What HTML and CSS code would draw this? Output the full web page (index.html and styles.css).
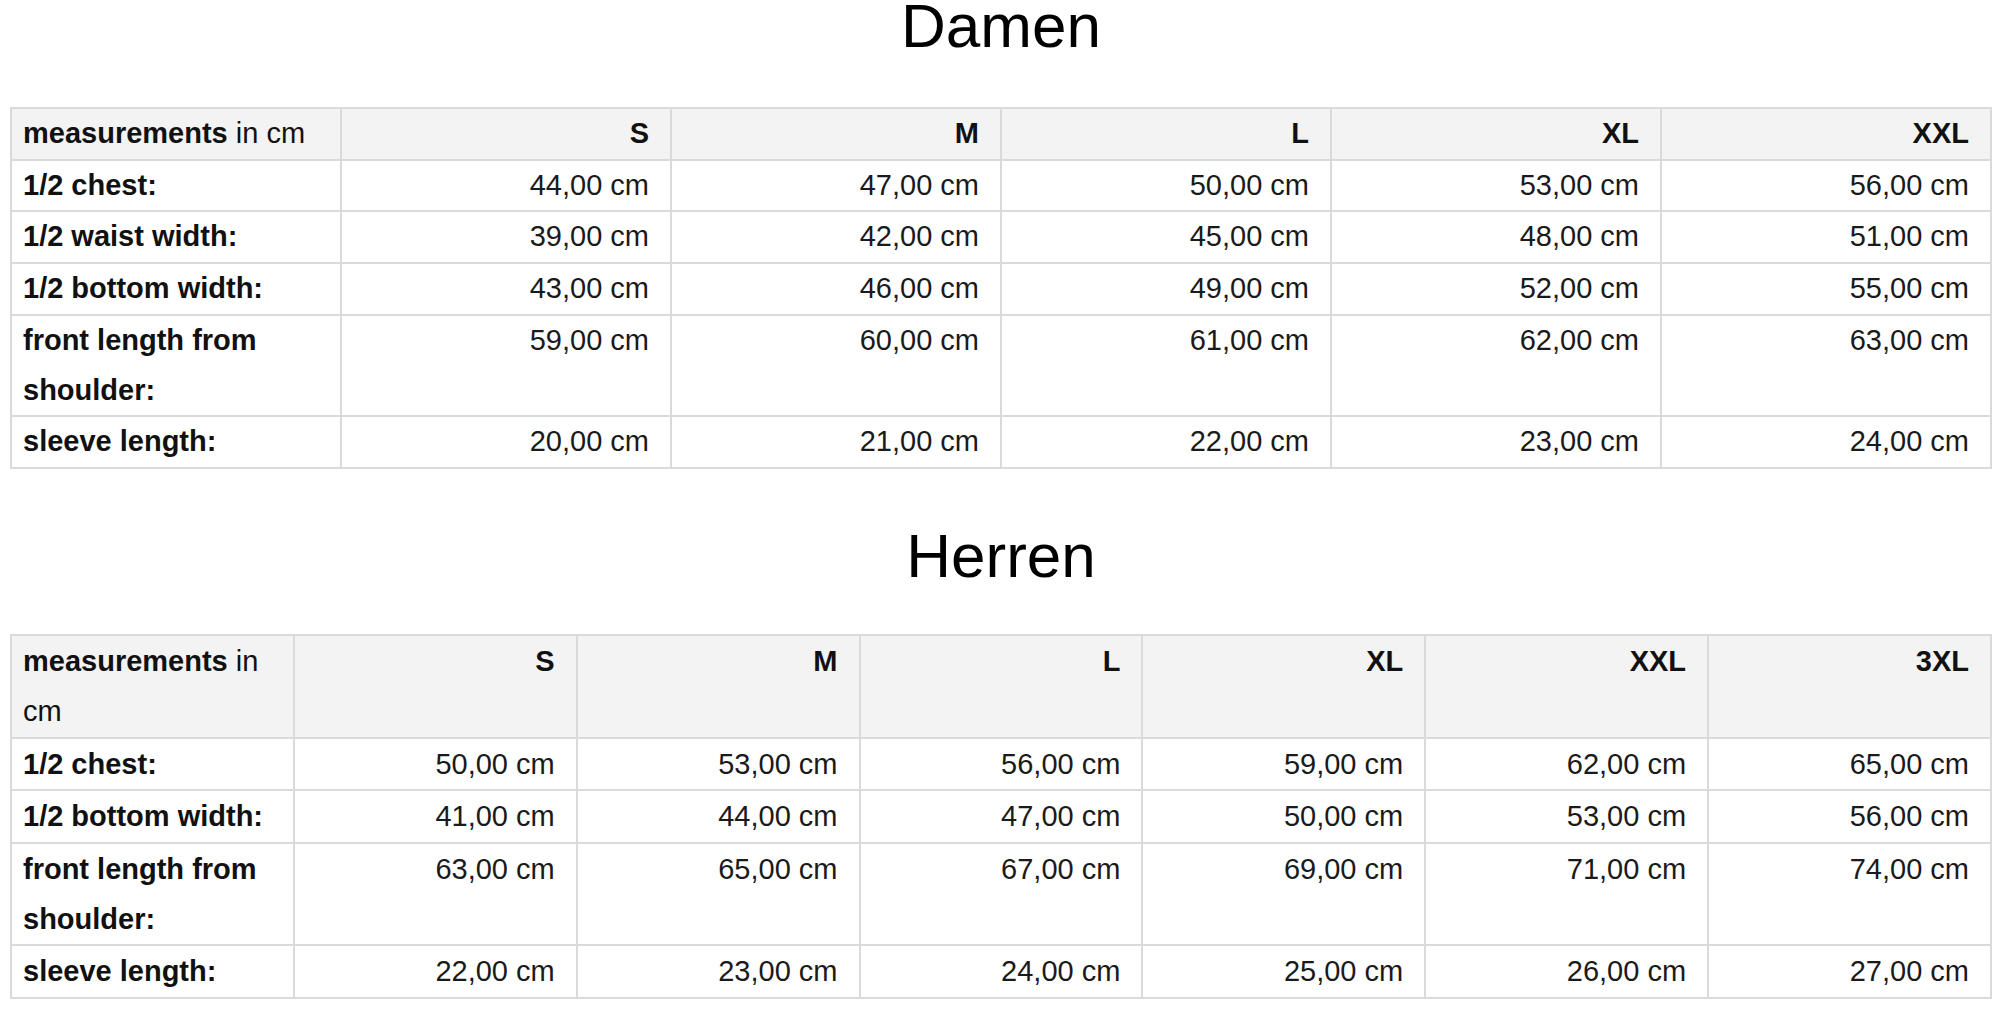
FILE: index.html
```html
<!DOCTYPE html>
<html lang="de">
<head>
<meta charset="utf-8">
<title>Größentabelle</title>
<link rel="stylesheet" href="styles.css">
</head>
<body>
<main class="page">
  <h2 class="title title-first">Damen</h2>
  <table class="sizes">
    <thead>
      <tr>
        <th class="label"><b>measurements</b> in cm</th>
        <th>S</th><th>M</th><th>L</th><th>XL</th><th>XXL</th>
      </tr>
    </thead>
    <tbody>
      <tr><th class="label">1/2 chest:</th><td>44,00 cm</td><td>47,00 cm</td><td>50,00 cm</td><td>53,00 cm</td><td>56,00 cm</td></tr>
      <tr><th class="label">1/2 waist width:</th><td>39,00 cm</td><td>42,00 cm</td><td>45,00 cm</td><td>48,00 cm</td><td>51,00 cm</td></tr>
      <tr><th class="label">1/2 bottom width:</th><td>43,00 cm</td><td>46,00 cm</td><td>49,00 cm</td><td>52,00 cm</td><td>55,00 cm</td></tr>
      <tr><th class="label">front length from shoulder:</th><td>59,00 cm</td><td>60,00 cm</td><td>61,00 cm</td><td>62,00 cm</td><td>63,00 cm</td></tr>
      <tr><th class="label">sleeve length:</th><td>20,00 cm</td><td>21,00 cm</td><td>22,00 cm</td><td>23,00 cm</td><td>24,00 cm</td></tr>
    </tbody>
  </table>

  <h2 class="title title-men">Herren</h2>
  <table class="sizes sizes-men">
    <thead>
      <tr>
        <th class="label"><b>measurements</b> in cm</th>
        <th>S</th><th>M</th><th>L</th><th>XL</th><th>XXL</th><th>3XL</th>
      </tr>
    </thead>
    <tbody>
      <tr><th class="label">1/2 chest:</th><td>50,00 cm</td><td>53,00 cm</td><td>56,00 cm</td><td>59,00 cm</td><td>62,00 cm</td><td>65,00 cm</td></tr>
      <tr><th class="label">1/2 bottom width:</th><td>41,00 cm</td><td>44,00 cm</td><td>47,00 cm</td><td>50,00 cm</td><td>53,00 cm</td><td>56,00 cm</td></tr>
      <tr><th class="label">front length from shoulder:</th><td>63,00 cm</td><td>65,00 cm</td><td>67,00 cm</td><td>69,00 cm</td><td>71,00 cm</td><td>74,00 cm</td></tr>
      <tr><th class="label">sleeve length:</th><td>22,00 cm</td><td>23,00 cm</td><td>24,00 cm</td><td>25,00 cm</td><td>26,00 cm</td><td>27,00 cm</td></tr>
    </tbody>
  </table>
</main>
</body>
</html>
```

FILE: styles.css
```css
html, body {
  margin: 0;
  padding: 0;
  background: #ffffff;
}

body {
  font-family: "Liberation Sans", Arial, sans-serif;
  color: #111111;
}

.page {
  padding: 0 8px 0 10px;
}

.title {
  margin: 61px 0 56px;
  font-size: 62px;
  line-height: 51px;
  font-weight: normal;
  text-align: center;
  color: #000000;
}

.title-first {
  margin-top: 0;
}

.title-men {
  margin-bottom: 53px;
}

.sizes {
  width: 100%;
  table-layout: fixed;
  border-collapse: collapse;
  font-size: 29px;
  line-height: 49.7px;
}

.sizes-men {
  line-height: 50.4px;
}

.sizes th,
.sizes td {
  border: 2px solid #dadada;
  padding: 0 21px 0 11px;
  text-align: right;
  vertical-align: top;
  color: #1a1a1a;
}

.sizes th {
  font-weight: bold;
  color: #111111;
}

.sizes thead th {
  background: #f3f3f3;
}

.sizes th.label {
  text-align: left;
}

.sizes thead th.label {
  font-weight: normal;
}

.sizes thead th.label b {
  font-weight: bold;
}
```
